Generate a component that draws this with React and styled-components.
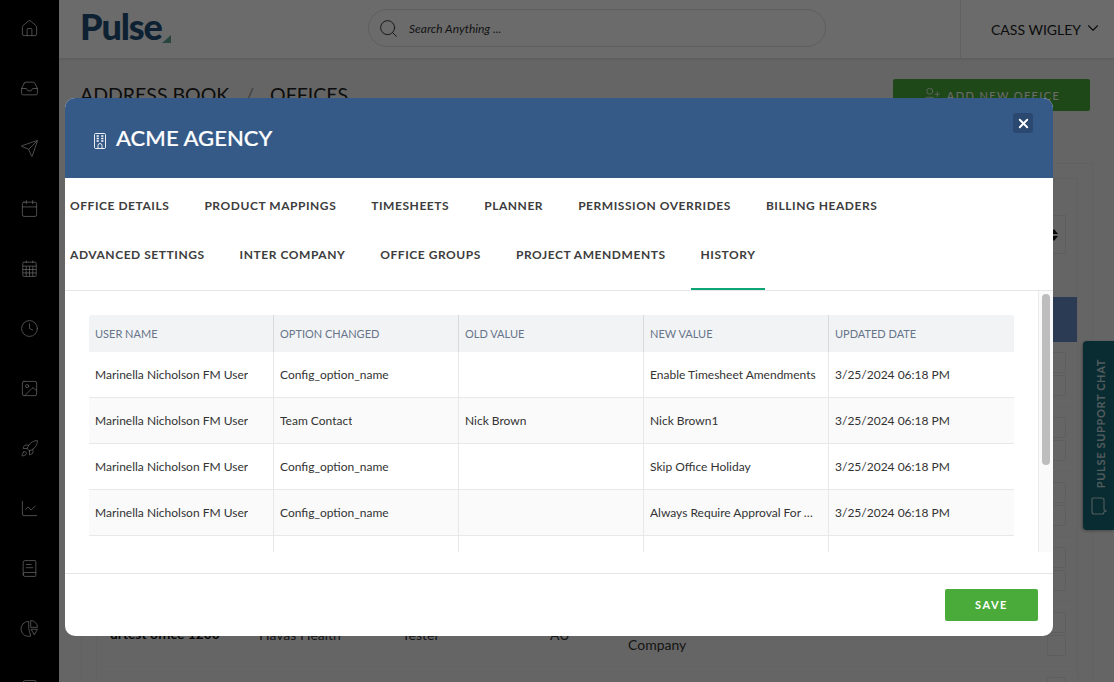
import React from 'react';
import styled, { createGlobalStyle } from 'styled-components';
import {
  Home, Inbox, Send, Calendar, Clock, Image, Rocket, LineChart, BookText, Search, ChevronDown, UserPlus, X,
} from 'lucide-react';

const Global = createGlobalStyle`
  html, body { margin: 0; padding: 0; }
  body { font-family: Lato, "Open Sans", sans-serif; background: #f1f1f1; overflow: hidden; }
  * { box-sizing: border-box; }
`;

const Shell = styled.div`
  position: relative;
  display: flex;
  width: 1114px;
  height: 682px;
  overflow: hidden;
`;
const Sidebar = styled.nav`
  flex: 0 0 59px;
  height: 700px;
  background: #000;
  display: flex;
  flex-direction: column;
  align-items: center;
  gap: 40px;
  padding-top: 18px;
  color: #fff;
`;
const SideIcon = styled.span`
  width: 20px;
  height: 20px;
  display: flex;
  align-items: center;
  justify-content: center;
`;
const Main = styled.div`
  flex: 1;
  min-width: 0;
  display: flex;
  flex-direction: column;
`;
const TopBar = styled.header`
  height: 58px;
  flex: none;
  background: #fff;
  display: flex;
  align-items: flex-start;
  padding-left: 21px;
  box-shadow: 0 1px 3px rgba(0,0,0,.12);
  position: relative;
`;
const Logo = styled.div`
  display: flex;
  align-items: flex-end;
  width: 288px;
  height: 34px;
  margin-top: 9px;
`;
const LogoWord = styled.span`
  font: 900 36px/34px Lato, sans-serif;
  letter-spacing: -1.1px;
  color: #1f4f78;
`;
const LogoCorner = styled.span`
  display: flex;
`;
const SearchBox = styled.div`
  width: 458px;
  height: 38px;
  margin-top: 9px;
  border: 1px solid #dfdfdf;
  border-radius: 19px;
  display: flex;
  align-items: center;
  gap: 10px;
  padding-left: 9px;
  color: #333;
  font: italic 400 12px Lato, sans-serif;
`;
const UserArea = styled.div`
  margin-left: auto;
  width: 154px;
  height: 58px;
  border-left: 1px solid #e6e6e6;
  display: flex;
  align-items: center;
  gap: 3px;
  padding-left: 30px;
  font: 400 14px Lato, sans-serif;
  color: #222;
`;
const Chevron = styled.span`
  display: flex;
  margin-top: -3px;
`;
const PageHead = styled.div`
  height: 47px;
  flex: none;
  margin-top: 21px;
  padding: 0 24px 0 21px;
  display: flex;
  justify-content: space-between;
`;
const Crumbs = styled.h1`
  margin: 0;
  padding-top: 4px;
  display: flex;
  gap: 16px;
  font: 400 19.5px/24px Lato, sans-serif;
  color: #222;
`;
const Slash = styled.span`
  color: #999;
`;
const AddButton = styled.button`
  width: 197px;
  height: 32px;
  border: 0;
  border-radius: 2px;
  background: #4aab3a;
  color: #fff;
  display: flex;
  align-items: center;
  justify-content: center;
  gap: 6px;
  font: 400 11px Lato, sans-serif;
  letter-spacing: 1.4px;
`;
const OuterFrame = styled.section`
  flex: none;
  height: 520px;
  margin: 37px 21px 0 22px;
  padding: 15px 15px 0;
  border: 1px solid #e8e8e8;
  border-bottom: 0;
`;
const InnerFrame = styled.div`
  border: 1px solid #e8e8e8;
  border-bottom: 0;
  height: 500px;
  margin: -1px -1px 0;
`;
const Filters = styled.div`
  height: 118px;
  padding: 36px 11px 0 0;
  display: flex;
  justify-content: flex-end;
`;
const SelectBox = styled.div`
  width: 60px;
  height: 39px;
  border: 1px solid #e0e0e0;
  display: flex;
  align-items: center;
  justify-content: flex-end;
  padding-right: 7px;
  color: #111;
  font-size: 10px;
`;
const BackHead = styled.div`
  height: 45px;
  background: #648cc5;
`;
const BackRow = styled.div`
  height: 65px;
  display: grid;
  grid-template-columns: 149px 143px 148px 78px 1fr auto;
  align-items: center;
  padding: 0 11px 0 13px;
  border-bottom: 1px solid #ececec;
  font: 400 14px/21px Lato, sans-serif;
  color: #333;
`;
const BackName = styled.strong`
  font-weight: 700;
  font-size: 13.8px;
  color: #111;
  margin-top: -2px;
`;
const RowActions = styled.div`
  display: flex;
  flex-direction: column;
  gap: 2px;
`;
const ActionBox = styled.span`
  display: block;
  width: 19px;
  height: 21px;
  border: 1px solid #e0e0e0;
  border-radius: 2px;
`;
const ChatTab = styled.aside`
  position: absolute;
  top: 341px;
  right: 0;
  width: 31px;
  height: 189px;
  background: #146a77;
  border-radius: 4px 0 0 4px;
  display: flex;
  flex-direction: column;
  align-items: center;
  gap: 9px;
  padding-top: 18px;
  color: rgba(255,255,255,.75);
  box-shadow: -1px 1px 3px rgba(0,0,0,.3);
`;
const ChatLabel = styled.span`
  writing-mode: vertical-rl;
  transform: rotate(180deg);
  margin-left: 5px;
  font: 700 11px/14px Lato, sans-serif;
  letter-spacing: .65px;
`;
const Overlay = styled.div`
  position: absolute;
  inset: 0;
  background: rgba(0,0,0,.58);
  padding: 98px 61px 0 65px;
`;
const Modal = styled.div`
  position: relative;
  width: 988px;
  height: 538px;
  background: #fff;
  border-radius: 10px;
  overflow: hidden;
  display: flex;
  flex-direction: column;
`;
const ModalHead = styled.div`
  height: 80px;
  flex: none;
  background: #355a88;
  color: #fff;
  display: flex;
  align-items: center;
  gap: 10px;
  padding-left: 29px;
`;
const ModalIcon = styled.span`
  display: flex;
  margin-top: 5px;
`;
const ModalTitle = styled.h2`
  margin: 0;
  font: 500 22px/26px Lato, sans-serif;
  letter-spacing: .05px;
  -webkit-text-stroke: .2px #fff;
`;
const Close = styled.button`
  position: absolute;
  top: 15px;
  right: 20px;
  width: 20px;
  height: 20px;
  padding: 0;
  border: 0;
  border-radius: 3px;
  background: #2b4870;
  color: #fff;
  display: flex;
  align-items: center;
  justify-content: center;
`;
const Tabs = styled.div`
  height: 113px;
  flex: none;
  padding: 3px 100px 0 5px;
  border-bottom: 1px solid #e6e6e6;
  display: flex;
  flex-wrap: wrap;
  align-content: flex-start;
  column-gap: 35px;
`;
const Tab = styled.div`
  position: relative;
  height: 49px;
  display: flex;
  align-items: center;
  font: 700 12px Lato, sans-serif;
  letter-spacing: .55px;
  color: #3d3d3d;
  white-space: nowrap;
  ${p => p.$active && `
    &::after {
      content: '';
      position: absolute;
      left: -10px;
      right: -10px;
      bottom: -11px;
      height: 2px;
      background: #0ba576;
    }
  `}
`;
const Body = styled.div`
  flex: 1;
  min-height: 0;
  display: flex;
  align-items: flex-start;
`;
const Viewport = styled.div`
  flex: 1;
  height: 261px;
  overflow: hidden;
  padding: 24px 24px 0;
`;
const Grid = styled.div`
  width: 925px;
`;
const HeadRow = styled.div`
  display: grid;
  grid-template-columns: repeat(5, 185px);
  height: 37px;
  background: #f2f3f5;
  border-radius: 3px 3px 0 0;
`;
const HeadCell = styled.div`
  display: flex;
  align-items: center;
  padding-left: 6px;
  font: 400 11px Lato, sans-serif;
  color: #67758a;
  border-right: ${p => (p.$last ? '0' : '1px solid #d9dadc')};
`;
const DataRow = styled.div`
  display: grid;
  grid-template-columns: repeat(5, 185px);
  height: 46px;
  background: ${p => (p.$alt ? '#fafafa' : '#fff')};
  border-bottom: 1px solid #e8e8e8;
`;
const Cell = styled.div`
  display: flex;
  align-items: center;
  min-width: 0;
  padding: 0 10px 0 6px;
  font: 400 12px Lato, sans-serif;
  color: #333;
  border-right: ${p => (p.$last ? '0' : '1px solid #e8e8e8')};
`;
const CellText = styled.span`
  overflow: hidden;
  text-overflow: ellipsis;
  white-space: nowrap;
`;
const ScrollTrack = styled.div`
  flex: none;
  width: 15px;
  height: 261px;
  background: #fafafa;
  border-left: 1px solid #ececec;
  padding: 3px 3px 0 3px;
`;
const Thumb = styled.div`
  height: 171px;
  background: #bdbdbd;
  border-radius: 4px;
`;
const Footer = styled.div`
  height: 63px;
  flex: none;
  border-top: 1px solid #e6e6e6;
  display: flex;
  justify-content: flex-end;
  align-items: flex-start;
  padding: 15px 15px 0 0;
`;
const Save = styled.button`
  width: 93px;
  height: 32px;
  border: 0;
  padding: 0 0 2px;
  border-radius: 2px;
  background: #4aab3a;
  color: #fff;
  font: 700 11px Lato, sans-serif;
  letter-spacing: 1.5px;
`;

const CalendarGrid = ({ size, strokeWidth }) => (
  <svg width={size} height={size} viewBox="0 0 24 24" fill="none" stroke="currentColor" strokeWidth={strokeWidth}>
    <rect x="3.5" y="4" width="17" height="18" rx="1.5" />
    <path d="M8 2v3M16 2v3M3.5 9h17M3.5 13.3h17M3.5 17.6h17M7.8 9v13M12 9v13M16.2 9v13" />
  </svg>
);
const PieWedges = ({ size, strokeWidth }) => (
  <svg width={size} height={size} viewBox="0 0 24 24" fill="none" stroke="currentColor" strokeWidth={strokeWidth} strokeLinejoin="round">
    <path d="M11 3a9.5 9.5 0 1 0 2.5 18.6L11 12z" />
    <path d="M13.5 2a8.5 8.5 0 0 1 8.5 8.5h-8.5z" />
    <path d="M14 13h8l-4 7z" />
  </svg>
);
const sideIcons = [Home, Inbox, Send, Calendar, CalendarGrid, Clock, Image, Rocket, LineChart, BookText, PieWedges, BookText];
const tabs = ['OFFICE DETAILS', 'PRODUCT MAPPINGS', 'TIMESHEETS', 'PLANNER', 'PERMISSION OVERRIDES', 'BILLING HEADERS', 'ADVANCED SETTINGS', 'INTER COMPANY', 'OFFICE GROUPS', 'PROJECT AMENDMENTS', 'HISTORY'];
const cols = ['USER NAME', 'OPTION CHANGED', 'OLD VALUE', 'NEW VALUE', 'UPDATED DATE'];
const user = 'Marinella Nicholson FM User';
const date = '3/25/2024 06:18 PM';
const rows = [
  [user, 'Config_option_name', '', 'Enable Timesheet Amendments', date],
  [user, 'Team Contact', 'Nick Brown', 'Nick Brown1', date],
  [user, 'Config_option_name', '', 'Skip Office Holiday', date],
  [user, 'Config_option_name', '', 'Always Require Approval For Project Amendments', date],
  ['', '', '', '', ''],
];

const BuildingIcon = () => (
  <svg width="12" height="16" viewBox="0 0 12 16" fill="none" stroke="#fff" strokeWidth=".9">
    <rect x=".5" y=".5" width="11" height="15" rx="1.2" />
    <path d="M2.6 3h2.2M7.2 3h2.2M2.6 5.5h2.2M7.2 5.5h2.2M2.6 8h2.2M7.2 8h2.2" strokeWidth="1.4" />
    <path d="M4 15.5V12.5a2 2 0 0 1 4 0v3" />
  </svg>
);
const ChatIcon = () => (
  <svg width="16" height="18" viewBox="0 0 16 18" fill="none" stroke="currentColor" strokeWidth="1.1">
    <path d="M2 1h9a2 2 0 0 1 2 2v9.5l2 1.5-2 .8V15a2 2 0 0 1-2 2H3a2 2 0 0 1-2-2V2a1 1 0 0 1 1-1z" />
  </svg>
);
const LogoMark = () => (
  <svg width="9" height="8" viewBox="0 0 9 8"><path d="M9 0v8H0z" fill="#5fa897" /></svg>
);
const SortIcon = () => (
  <svg width="8" height="14" viewBox="0 0 8 14"><path d="M4 1l4 5H0zM4 13l4-5H0z" fill="currentColor" /></svg>
);

export default function App() {
  return (
    <Shell>
      <Global />
      <Sidebar>
        {sideIcons.map((Icon, i) => (
          <SideIcon key={i}><Icon size={19} strokeWidth={0.9} /></SideIcon>
        ))}
      </Sidebar>
      <Main>
        <TopBar>
          <Logo><LogoWord>Pulse</LogoWord><LogoCorner><LogoMark /></LogoCorner></Logo>
          <SearchBox><Search size={21} strokeWidth={1.1} />Search Anything ...</SearchBox>
          <UserArea>CASS WIGLEY<Chevron><ChevronDown size={18} strokeWidth={1.5} /></Chevron></UserArea>
        </TopBar>
        <PageHead>
          <Crumbs><span>ADDRESS BOOK</span><Slash>/</Slash><span>OFFICES</span></Crumbs>
          <AddButton><UserPlus size={18} strokeWidth={1} />ADD NEW OFFICE</AddButton>
        </PageHead>
        <OuterFrame>
          <InnerFrame>
            <Filters><SelectBox><SortIcon /></SelectBox></Filters>
            <BackHead />
            {[0, 1, 2, 3].map(i => (
              <BackRow key={i}>
                <span /><span /><span /><span /><span />
                <RowActions><ActionBox /><ActionBox /></RowActions>
              </BackRow>
            ))}
            <BackRow>
              <BackName>urtest office 1200</BackName>
              <span>Havas Health</span>
              <span>Tester</span>
              <span>AU</span>
              <span>Holding<br />Company</span>
              <RowActions><ActionBox /><ActionBox /></RowActions>
            </BackRow>
            <BackRow>
              <span /><span /><span /><span /><span />
              <RowActions><ActionBox /><ActionBox /></RowActions>
            </BackRow>
          </InnerFrame>
        </OuterFrame>
      </Main>
      <ChatTab>
        <ChatLabel>PULSE SUPPORT CHAT</ChatLabel>
        <ChatIcon />
      </ChatTab>
      <Overlay>
        <Modal>
          <ModalHead>
            <ModalIcon><BuildingIcon /></ModalIcon>
            <ModalTitle>ACME AGENCY</ModalTitle>
            <Close aria-label="Close"><X size={15} strokeWidth={3} /></Close>
          </ModalHead>
          <Tabs>
            {tabs.map(t => <Tab key={t} $active={t === 'HISTORY'}>{t}</Tab>)}
          </Tabs>
          <Body>
            <Viewport>
              <Grid>
                <HeadRow>
                  {cols.map((c, i) => <HeadCell key={c} $last={i === 4}>{c}</HeadCell>)}
                </HeadRow>
                {rows.map((r, i) => (
                  <DataRow key={i} $alt={i % 2 === 1}>
                    {r.map((v, j) => <Cell key={j} $last={j === 4}><CellText>{v}</CellText></Cell>)}
                  </DataRow>
                ))}
              </Grid>
            </Viewport>
            <ScrollTrack><Thumb /></ScrollTrack>
          </Body>
          <Footer><Save>SAVE</Save></Footer>
        </Modal>
      </Overlay>
    </Shell>
  );
}
